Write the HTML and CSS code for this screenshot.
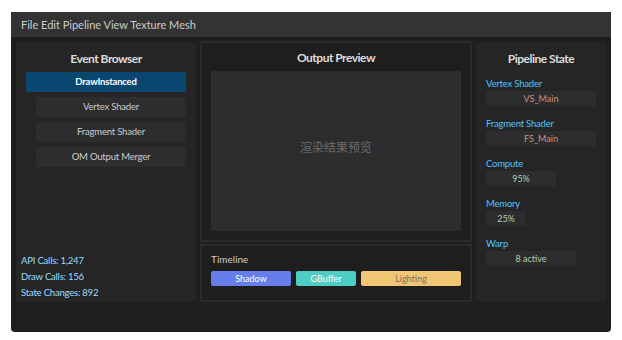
FILE: index.html
```html
<!DOCTYPE html>
<html>
<head>
    <meta charset="utf-8">
    <link rel="stylesheet" href="styles.css">
</head>
<body>
    <div class="window">
        <div class="menubar">File Edit Pipeline View Texture Mesh</div>
        <div class="main">
            <div class="panel events">
                <div class="panel-title">Event Browser</div>
                <div class="event active">DrawInstanced</div>
                <div class="event child">Vertex Shader</div>
                <div class="event child">Fragment Shader</div>
                <div class="event child">OM Output Merger</div>
                <div class="stats">
                    <div>API Calls: 1,247</div>
                    <div>Draw Calls: 156</div>
                    <div>State Changes: 892</div>
                </div>
            </div>
            <div class="center">
                <div class="box output">
                    <div class="panel-title">Output Preview</div>
                    <div class="preview">渲染结果预览</div>
                </div>
                <div class="box timeline">
                    <div class="timeline-label">Timeline</div>
                    <div class="bars">
                        <div class="bar shadow">Shadow</div>
                        <div class="bar gbuffer">GBuffer</div>
                        <div class="bar lighting">Lighting</div>
                    </div>
                </div>
            </div>
            <div class="panel state">
                <div class="panel-title">Pipeline State</div>
                <div class="group">
                    <div class="label">Vertex Shader</div>
                    <div class="value shader">VS_Main</div>
                </div>
                <div class="group">
                    <div class="label">Fragment Shader</div>
                    <div class="value shader">FS_Main</div>
                </div>
                <div class="group">
                    <div class="label">Compute</div>
                    <div class="value num w70">95%</div>
                </div>
                <div class="group">
                    <div class="label">Memory</div>
                    <div class="value num w40">25%</div>
                </div>
                <div class="group">
                    <div class="label">Warp</div>
                    <div class="value num w90">8 active</div>
                </div>
            </div>
        </div>
    </div>
</body>
</html>
```

FILE: styles.css
```css
body {
    margin: 0;
    padding: 12px 11px;
    background: #ffffff;
    font-family: Lato, "Noto Sans CJK SC", sans-serif;
}
.window {
    width: 600px;
    height: 320px;
    background: #1e1e1e;
    border-radius: 0 0 4px 4px;
    overflow: hidden;
    display: flex;
    flex-direction: column;
}
.menubar {
    height: 25px;
    line-height: 25px;
    background: #333333;
    color: #cccccc;
    font-size: 11px;
    padding-left: 10px;
}
.main {
    flex: 1;
    display: flex;
    gap: 4px;
    padding: 4px 5px 30px 5px;
}
.panel {
    background: #252526;
    border-radius: 4px;
    margin-top: 1px;
    padding: 9px 10px 1px 10px;
    display: flex;
    flex-direction: column;
}
.panel-title {
    text-align: center;
    font-size: 12px;
    font-weight: 700;
    letter-spacing: -0.5px;
    line-height: 16px;
    color: #dddddd;
    margin-bottom: 5px;
}
.events {
    width: 160px;
}
.event {
    height: 20px;
    line-height: 20px;
    text-align: center;
    font-size: 9.5px;
    letter-spacing: -0.2px;
    color: #cccccc;
    background: #2d2d30;
    margin-bottom: 5px;
}
.event.active {
    background: #094771;
    color: #ffffff;
    font-weight: 700;
}
.event.child {
    margin-left: 10px;
}
.stats {
    margin-top: auto;
    font-size: 9.5px;
    letter-spacing: -0.2px;
    line-height: 16px;
    color: #9cdcfe;
    margin-left: -5px;
}
.center {
    width: 272px;
    display: flex;
    flex-direction: column;
    gap: 2px;
}
.box {
    border: 2px solid #2a2a2a;
    background: #1e1e1e;
}
.output {
    padding: 7px 9px 9px 9px;
}
.preview {
    height: 150px;
    padding-bottom: 10px;
    background: #2d2d30;
    color: #6a6a6a;
    font-size: 12px;
    display: flex;
    align-items: center;
    justify-content: center;
}
.timeline {
    flex: 1;
    padding: 6px 9px 0 9px;
}
.timeline-label {
    font-size: 10px;
    line-height: 15px;
    color: #cccccc;
    margin-bottom: 4px;
}
.bars {
    display: flex;
    gap: 5px;
}
.bar {
    height: 15px;
    line-height: 15px;
    border-radius: 2px;
    text-align: center;
    font-size: 9px;
    color: #ffffff;
}
.shadow {
    width: 80px;
    background: #667eea;
}
.gbuffer {
    width: 60px;
    background: #4ecdc4;
}
.lighting {
    width: 100px;
    background: #f0c674;
    color: #7d6e58;
}
.state {
    width: 110px;
}
.state .panel-title {
    margin-bottom: 9px;
}
.group {
    margin-bottom: 10px;
}
.label {
    font-size: 9.5px;
    letter-spacing: -0.2px;
    line-height: 15px;
    color: #4fc1ff;
}
.value {
    height: 15px;
    line-height: 15px;
    background: #2d2d30;
    text-align: center;
    font-size: 9px;
}
.shader {
    color: #ce9178;
}
.num {
    color: #b5cea8;
}
.w70 { width: 70px; }
.w40 { width: 40px; }
.w90 { width: 90px; }
```
